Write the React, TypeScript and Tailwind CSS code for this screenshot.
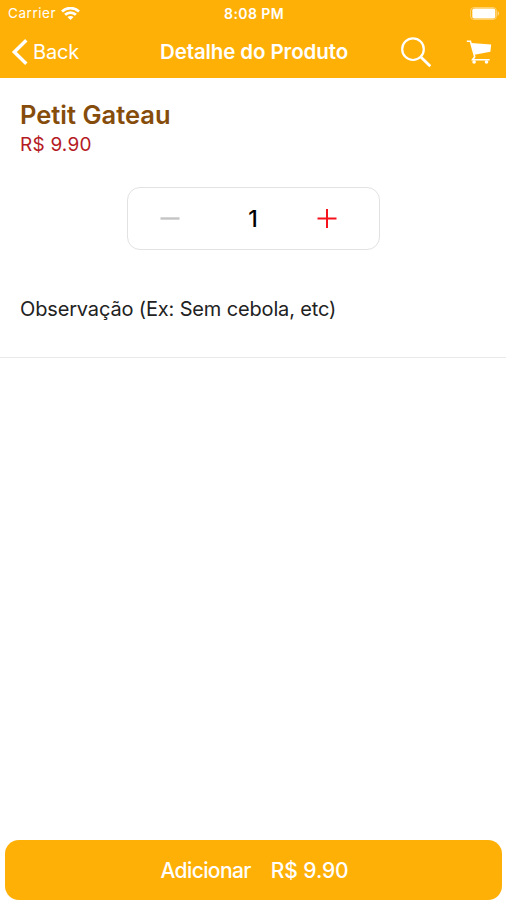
import { useState } from "react";

const PRICE = 9.9;

function StatusBar() {
  return (
    <div className="grid h-[26px] grid-cols-3 items-center pt-px pr-[6px] pl-[8px] text-[13.5px]">
      <div className="flex items-center gap-[5px]">
        <span className="tracking-[0.55px]">Carrier</span>
        <svg width="19" height="14" viewBox="0 0 19 14" fill="none" stroke="currentColor" strokeWidth="2.7">
          <path d="M1 4.4C5.8 0 13.2 0 18 4.4" />
          <path d="M4.1 7.7c3-2.9 7.8-2.9 10.8 0" />
          <path d="M9.5 13 6.5 10c1.7-1.5 4.3-1.5 6 0Z" fill="currentColor" stroke="none" />
        </svg>
      </div>
      <span className="text-center text-[14px] font-semibold tracking-[0.4px]">8:08 PM</span>
      <svg className="justify-self-end" width="30" height="14" viewBox="0 0 30 14" fill="currentColor">
        <rect x="0.5" y="0.5" width="26" height="12" rx="3.5" fill="none" stroke="currentColor" opacity="0.4" />
        <rect x="2.3" y="1.5" width="23" height="10" rx="2" />
        <path d="M27.6 4.2c2 .7 2 3.8 0 4.5Z" opacity="0.5" />
      </svg>
    </div>
  );
}

function NavBar() {
  return (
    <div className="grid h-[52px] grid-cols-[1fr_auto_1fr] items-center pr-[13px] pl-[15px]">
      <button className="-ml-[4px] flex items-center gap-[5px] text-[20px]">
        <svg width="17" height="28" viewBox="0 0 17 28" fill="none" stroke="currentColor" strokeWidth="3.4">
          <path d="M15.3 2.3 3.3 14l12 11.7" />
        </svg>
        <span className="tracking-[-0.2px]">Back</span>
      </button>
      <h1 className="text-[20.5px] font-semibold tracking-[-0.1px]">Detalhe do Produto</h1>
      <div className="flex items-center justify-end gap-[34px]">
        <svg width="32" height="32" viewBox="0 0 32 32" fill="none" stroke="currentColor" strokeWidth="2.2">
          <circle cx="13" cy="13.2" r="10.8" />
          <path d="m20.8 21 9.5 9.3" strokeWidth="2.8" />
        </svg>
        <svg width="27" height="26" viewBox="0 0 27 26" fill="currentColor">
          <path d="M.8 2.3h3.6l4.3 15.5-2.1 3h17.1" fill="none" stroke="currentColor" strokeWidth="1.6" />
          <path d="M5.2 4 25.2 5.4 24.4 12.7 8.5 15.8Z" />
          <circle cx="8.1" cy="23" r="1.8" />
          <circle cx="20.5" cy="23" r="1.8" />
        </svg>
      </div>
    </div>
  );
}

export default function App() {
  const [quantity, setQuantity] = useState(1);

  return (
    <div className="flex h-[900px] w-full flex-col bg-white font-['Inter',sans-serif]">
      <header className="h-[78px] shrink-0 bg-[#ffb007] text-white">
        <StatusBar />
        <NavBar />
      </header>

      <main className="flex-1">
        <section className="flex flex-col px-[20px] pt-[21px]">
          <h2 className="text-[25.5px] leading-[32px] font-semibold text-[#854c0b]">Petit Gateau</h2>
          <p className="pt-px text-[19px] leading-[26px] tracking-[0.2px] text-[#b51b25]">R$ {PRICE.toFixed(2)}</p>
          <div className="mt-[29px] grid h-[63px] w-[253px] grid-cols-[84px_1fr_104px] items-center self-center rounded-[13px] border border-[#e2e2e2]">
            <button
              className="flex justify-center text-[#c4c4c4]"
              onClick={() => setQuantity(Math.max(1, quantity - 1))}
            >
              <svg width="20" height="20" viewBox="0 0 20 20" stroke="currentColor" strokeWidth="2.4">
                <path d="M.5 9.5h19" />
              </svg>
            </button>
            <span className="pt-px pl-[20px] text-center text-[23px] font-medium text-black">{quantity}</span>
            <button className="flex justify-center text-[#f5121d]" onClick={() => setQuantity(quantity + 1)}>
              <svg width="20" height="20" viewBox="0 0 20 20" stroke="currentColor" strokeWidth="2">
                <path d="M.5 9.5h19M10 0v19" />
              </svg>
            </button>
          </div>
        </section>

        <section className="mt-[44px] h-[64px] border-b border-[#e9e9e9] px-[20px]">
          <p className="text-[20px] leading-[30px] tracking-[-0.15px] text-[#222]">Observação (Ex: Sem cebola, etc)</p>
        </section>
      </main>

      <footer className="pr-[4px] pl-[5px]">
        <button className="flex h-[60px] w-full items-center justify-center gap-[20px] rounded-[14px] bg-[#ffb007] pt-px pl-[2px] text-[21px] font-medium text-white">
          <span className="tracking-[-0.6px]">Adicionar</span>
          <span className="tracking-[-0.1px]">R$ {(PRICE * quantity).toFixed(2)}</span>
        </button>
      </footer>
    </div>
  );
}
